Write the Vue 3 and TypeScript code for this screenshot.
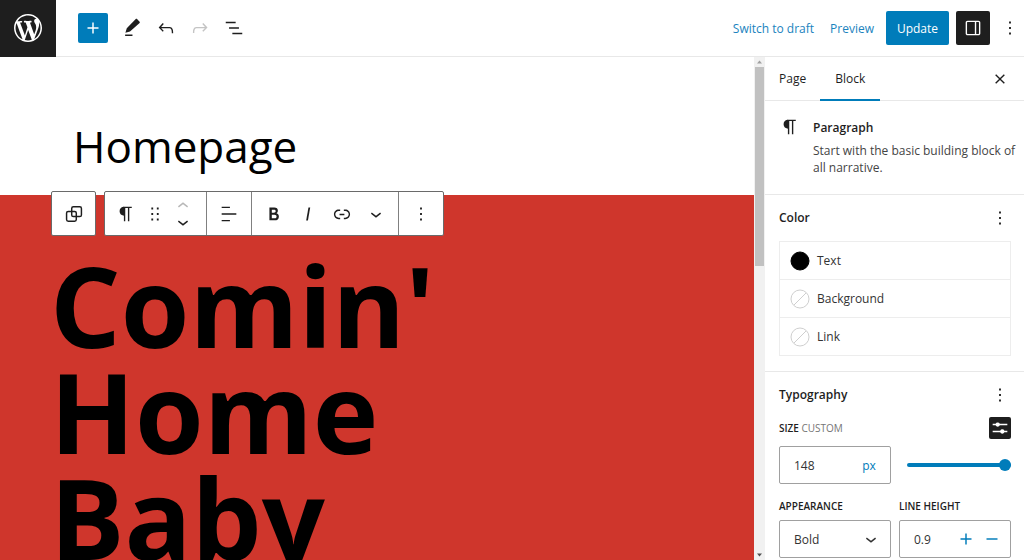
<script setup lang="ts">
import { ref } from 'vue'

const icons = {
  logo: 'M20 10c0-5.51-4.49-10-10-10C4.48 0 0 4.49 0 10c0 5.52 4.48 10 10 10 5.51 0 10-4.48 10-10zM7.78 15.37L4.37 6.22c.55-.02 1.17-.08 1.17-.08.5-.06.44-1.13-.06-1.11 0 0-1.45.11-2.37.11-.18 0-.37 0-.58-.01C4.12 2.69 6.87 1.11 10 1.11c2.33 0 4.45.87 6.05 2.34-.68-.11-1.65.39-1.65 1.58 0 .74.45 1.36.9 2.1.35.61.55 1.36.55 2.46 0 1.49-1.4 5-1.4 5l-3.03-8.37c.54-.02.82-.17.82-.17.5-.05.44-1.25-.06-1.22 0 0-1.44.12-2.38.12-.87 0-2.33-.12-2.33-.12-.5-.03-.56 1.2-.06 1.22l.92.08 1.26 3.41zM17.41 10c.24-.64.74-1.87.43-4.25.7 1.29 1.05 2.71 1.05 4.25 0 3.29-1.73 6.24-4.4 7.78.97-2.59 1.94-5.2 2.92-7.78zM6.1 18.09C3.12 16.65 1.11 13.53 1.11 10c0-1.3.23-2.48.72-3.59C3.25 10.3 4.67 14.2 6.1 18.09zm4.03-6.63l2.58 6.98c-.86.29-1.76.45-2.71.45-.79 0-1.57-.11-2.29-.33.81-2.38 1.62-4.74 2.42-7.1z',
  plus: 'M18 11.2h-5.2V6h-1.6v5.2H6v1.6h5.2V18h1.6v-5.2H18z',
  minus: 'M6 11.2h12v1.6H6z',
  edit: 'M20.3 5.300L17.500 2.300c-.4-.4-1-.4-1.400 0L6.300 12.200 4.800 17.200l5-1.500L20.300 6.500c.4-.4.4-.8 0-1.200zM4.500 20.800h8v-1.600h-8v1.600z',
  undo: 'M18.3 11.7c-.6-.6-1.4-.9-2.3-.9H6.7l2.9-3.3-1.1-1-4.5 5L8.5 16l1-1-2.7-2.7H16c.5 0 .9.2 1.3.5 1 1 1 3.4 1 4.5v.3h1.5v-.2c0-1.5 0-4.3-1.5-5.7z',
  redo: 'M15.6 6.5l-1.1 1 2.9 3.3H8c-.9 0-1.7.3-2.3.9-1.4 1.5-1.4 4.2-1.4 5.6v.2h1.5v-.3c0-1.1 0-3.5 1-4.5.3-.3.7-.5 1.3-.5h9.2L14.5 15l1.1 1.1 4.6-4.6-4.6-5z',
  list: 'M13.8 5.2H3v1.5h10.8V5.2zm-3.6 12v1.5H21v-1.5H10.2zm7.2-6H6.6v1.5h10.8v-1.5z',
  drawer: 'M18 4H6c-1.1 0-2 .9-2 2v12c0 1.1.9 2 2 2h12c1.1 0 2-.9 2-2V6c0-1.1-.9-2-2-2zm-4 14.5H6c-.3 0-.5-.2-.5-.5V6c0-.3.2-.5.5-.5h8v13zm4.5-.5c0 .3-.2.5-.5.5h-2.5v-13H18c.3 0 .5.2.5.5v12z',
  more: 'M13 19h-2v-2h2v2zm0-6h-2v-2h2v2zm0-6h-2V5h2v2z',
  close: 'M12 13.06l4.2 4.2 1.06-1.06L13.06 12l4.2-4.2-1.06-1.06L12 10.94l-4.2-4.2L6.74 7.8l4.2 4.2-4.2 4.2 1.06 1.06L12 13.06z',
  paragraph: 'M18.3 4H9.9v-.1l-.9.2c-2.3.4-4 2.4-4 4.8s1.7 4.4 4 4.8l.7.1V20h1.5V5.5h2.9V20h1.5V5.5h2.7V4z',
  drag: 'M8 7h2V5H8v2zm0 6h2v-2H8v2zm0 6h2v-2H8v2zm6-14v2h2V5h-2zm0 8h2v-2h-2v2zm0 6h2v-2h-2v2z',
  up: 'M6.5 12.4L12 8l5.5 4.4-.9 1.2L12 10l-4.5 3.6-1-1.2z',
  down: 'M17.5 11.6L12 16l-5.5-4.4.9-1.2L12 14l4.5-3.6 1 1.2z',
  align: 'M13 5.5H4V4h9v1.5Zm7 7.2H4v-1.5h16v1.5ZM13 20H4v-1.5h9V20Z',
  bold: 'M14.7 11.3c1-.6 1.5-1.6 1.5-3 0-2.3-1.3-3.4-4-3.4H7v14h5.8c1.4 0 2.5-.3 3.3-1 .8-.7 1.2-1.7 1.2-2.9.1-1.9-.8-3.1-2.6-3.7zm-5.1-4h2.3c.6 0 1.1.1 1.4.4.3.3.5.7.5 1.2s-.2 1-.5 1.2c-.3.3-.8.4-1.4.4H9.6V7.3zm4.6 9c-.4.3-1 .4-1.7.4H9.6v-3.9h2.9c.7 0 1.3.2 1.7.5.4.3.6.8.6 1.5s-.2 1.2-.6 1.5z',
  italic: 'M12.5 5L10 19h1.9l2.5-14z',
  link: 'M15.6 7.2H14v1.5h1.6c2 0 3.7 1.7 3.7 3.7s-1.7 3.7-3.7 3.7H14v1.5h1.6c2.8 0 5.2-2.3 5.2-5.2 0-2.9-2.3-5.2-5.2-5.2zM4.7 12.4c0-2 1.7-3.7 3.7-3.7H10V7.2H8.4c-2.9 0-5.2 2.3-5.2 5.2 0 2.9 2.3 5.2 5.2 5.2H10v-1.5H8.4c-2 0-3.7-1.7-3.7-3.7zm4.6.9h5.3v-1.5H9.3v1.5z',
  settings: 'M20 7.400h-8.200a2.500 2.500 0 0 0-4.600 0H4v1.700h3.200a2.500 2.500 0 0 0 4.600 0H20zM20 15h-3.200a2.500 2.500 0 0 0-4.600 0H4v1.700h8.200a2.500 2.500 0 0 0 4.600 0H20z',
}

const colors = [
  { name: 'Text', set: true },
  { name: 'Background', set: false },
  { name: 'Link', set: false },
]

const size = ref('148')
const slider = ref(148)
const appearance = ref('Bold')
const lineHeight = ref('0.9')
</script>

<template>
  <div class="editor">
    <header class="topbar">
      <a class="home" href="#" aria-label="View pages">
        <svg viewBox="0 0 20 20"><path :d="icons.logo" /></svg>
      </a>
      <div class="tools">
        <button class="tool add" aria-label="Add block"><svg class="icon" viewBox="0 0 24 24"><path :d="icons.plus" /></svg></button>
        <button class="tool" aria-label="Tools"><svg class="icon" viewBox="0 0 24 24"><path :d="icons.edit" /></svg></button>
        <button class="tool" aria-label="Undo"><svg class="icon" viewBox="0 0 24 24"><path :d="icons.undo" /></svg></button>
        <button class="tool" aria-label="Redo" disabled><svg class="icon" viewBox="0 0 24 24"><path :d="icons.redo" /></svg></button>
        <button class="tool" aria-label="List view"><svg class="icon" viewBox="0 0 24 24"><path :d="icons.list" /></svg></button>
      </div>
      <div class="actions">
        <button class="text-button">Switch to draft</button>
        <button class="text-button">Preview</button>
        <button class="update">Update</button>
        <button class="panel-toggle" aria-label="Settings" aria-pressed="true"><svg class="icon" viewBox="0 0 24 24"><path :d="icons.drawer" /></svg></button>
        <button class="options" aria-label="Options"><svg class="icon" viewBox="0 0 24 24"><path :d="icons.more" /></svg></button>
      </div>
    </header>

    <div class="body">
      <main class="canvas">
        <h1 class="title">Homepage</h1>
        <section class="cover">
          <div class="block-toolbar" role="toolbar" aria-label="Block tools">
            <div class="bar">
              <div class="group single">
                <button aria-label="Select parent block">
                  <svg class="icon outline" viewBox="0 0 24 24">
                    <rect x="9.500" y="4.200" width="10.600" height="10.600" rx="1.800" />
                    <rect x="3.900" y="9.200" width="10.600" height="10.600" rx="1.800" />
                  </svg>
                </button>
              </div>
            </div>
            <div class="bar">
              <div class="group block-type">
                <button aria-label="Paragraph"><svg class="icon" viewBox="0 0 24 24"><path :d="icons.paragraph" /></svg></button>
                <button class="narrow" aria-label="Drag"><svg class="icon" viewBox="0 0 24 24"><path :d="icons.drag" /></svg></button>
                <div class="movers">
                  <button aria-label="Move up" disabled><svg class="icon" viewBox="0 0 24 24"><path :d="icons.up" /></svg></button>
                  <button aria-label="Move down"><svg class="icon" viewBox="0 0 24 24"><path :d="icons.down" /></svg></button>
                </div>
              </div>
              <div class="group single">
                <button aria-label="Align text"><svg class="icon" viewBox="0 0 24 24"><path :d="icons.align" /></svg></button>
              </div>
              <div class="group format">
                <button aria-label="Bold"><svg class="icon" viewBox="0 0 24 24"><path :d="icons.bold" /></svg></button>
                <button aria-label="Italic"><svg class="icon" viewBox="0 0 24 24"><path :d="icons.italic" /></svg></button>
                <button aria-label="Link"><svg class="icon" viewBox="0 0 24 24"><path :d="icons.link" /></svg></button>
                <button aria-label="More"><svg class="icon" viewBox="0 0 24 24"><path :d="icons.down" /></svg></button>
              </div>
              <div class="group single">
                <button aria-label="Options"><svg class="icon" viewBox="0 0 24 24"><path :d="icons.more" /></svg></button>
              </div>
            </div>
          </div>
          <p class="lead">Comin'<br />Home<br />Baby</p>
        </section>
      </main>

      <div class="scrollbar" aria-hidden="true">
        <svg viewBox="0 0 11 9"><path d="M3 6l2.500-3L8 6z" fill="#a0a0a0" /></svg>
        <div class="thumb"></div>
        <svg viewBox="0 0 11 9"><path d="M3 3l2.500 3L8 3z" fill="#505050" /></svg>
      </div>

      <aside class="sidebar">
        <div class="tabs">
          <button class="tab">Page</button>
          <button class="tab active">Block</button>
          <button class="close" aria-label="Close settings"><svg class="icon" viewBox="0 0 24 24"><path :d="icons.close" /></svg></button>
        </div>

        <section class="card">
          <svg class="icon" viewBox="0 0 24 24"><path :d="icons.paragraph" /></svg>
          <div>
            <h2>Paragraph</h2>
            <p>Start with the basic building block of all narrative.</p>
          </div>
        </section>

        <section class="panel">
          <div class="panel-head">
            <h2>Color</h2>
            <button aria-label="Color options"><svg class="icon" viewBox="0 0 24 24"><path :d="icons.more" /></svg></button>
          </div>
          <div class="colors">
            <button v-for="c in colors" :key="c.name" class="color">
              <svg viewBox="0 0 20 20" class="swatch" :class="{ filled: c.set }">
                <circle cx="10" cy="10" r="9" />
                <path v-if="!c.set" d="M4 16L16 4" />
              </svg>
              {{ c.name }}
            </button>
          </div>
        </section>

        <section class="panel">
          <div class="panel-head type-head">
            <h2>Typography</h2>
            <button aria-label="Typography options"><svg class="icon" viewBox="0 0 24 24"><path :d="icons.more" /></svg></button>
          </div>
          <div class="size-head">
            <label for="size">SIZE <span>CUSTOM</span></label>
            <button class="preset" aria-label="Use size preset"><svg class="icon" viewBox="0 0 24 24"><path :d="icons.settings" /></svg></button>
          </div>
          <div class="pair size-row">
            <div class="field">
              <input id="size" v-model="size" type="text" />
              <button class="unit">px</button>
            </div>
            <input v-model="slider" class="range" type="range" min="0" max="148" aria-label="Size" />
          </div>
          <div class="pair">
            <div>
              <label class="caption" for="appearance">APPEARANCE</label>
              <div class="field">
                <select id="appearance" v-model="appearance">
                  <option>Bold</option>
                  <option>Regular</option>
                </select>
                <svg class="icon chevron" viewBox="0 0 24 24"><path :d="icons.down" /></svg>
              </div>
            </div>
            <div>
              <label class="caption" for="line-height">LINE HEIGHT</label>
              <div class="field">
                <input id="line-height" v-model="lineHeight" type="text" />
                <button class="step" aria-label="Increase"><svg class="icon" viewBox="0 0 24 24"><path :d="icons.plus" /></svg></button>
                <button class="step" aria-label="Decrease"><svg class="icon" viewBox="0 0 24 24"><path :d="icons.minus" /></svg></button>
              </div>
            </div>
          </div>
        </section>
      </aside>
    </div>
  </div>
</template>

<style>
body {
  margin: 0;
  overflow: hidden;
}
</style>

<style scoped>
.editor {
  display: flex;
  flex-direction: column;
  height: 100vh;
  overflow: hidden;
  background: #fff;
  color: #1e1e1e;
  font-family: "Open Sans", "Noto Sans", sans-serif;
  font-size: 12px;
}
.editor * {
  box-sizing: border-box;
}
button,
input,
select {
  margin: 0;
  padding: 0;
  border: 0;
  background: none;
  color: inherit;
  font: inherit;
}
button {
  display: flex;
  align-items: center;
  justify-content: center;
}
h1,
h2,
p {
  margin: 0;
}
.icon {
  display: block;
  flex: none;
  width: 22px;
  height: 22px;
  fill: currentColor;
}
.outline {
  fill: none;
  stroke: currentColor;
  stroke-width: 1.6;
}

/* Top bar */
.topbar {
  display: flex;
  flex: none;
  align-items: center;
  height: 57px;
  border-bottom: 1px solid #e8e8e8;
}
.home {
  display: flex;
  align-items: center;
  justify-content: center;
  flex: none;
  width: 56px;
  height: 57px;
  background: #1e1e1e;
  color: #fff;
}
.home svg {
  width: 28px;
  height: 28px;
  fill: currentColor;
}
.tools {
  display: flex;
  gap: 4px;
  margin-left: 22px;
}
.tool {
  width: 30px;
  height: 30px;
}
.tool:disabled {
  color: #c4c4c4;
}
.add {
  margin-right: 5px;
  border-radius: 2px;
  background: #007cba;
  color: #fff;
}
.actions {
  display: flex;
  align-items: center;
  margin-left: auto;
}
.text-button {
  margin-right: 16px;
  color: #1a83be;
}
.text-button + .text-button {
  margin-right: 12px;
}
.update {
  width: 63px;
  height: 34px;
  border-radius: 2px;
  background: #007cba;
  color: #fff;
}
.panel-toggle {
  width: 34px;
  height: 34px;
  margin-left: 7px;
  border-radius: 2px;
  background: #1e1e1e;
  color: #fff;
}
.options {
  width: 34px;
  height: 34px;
  margin: 0 -3px 0 3px;
}

/* Canvas */
.body {
  display: flex;
  flex: 1;
  min-height: 0;
}
.canvas {
  display: flex;
  flex: 1;
  flex-direction: column;
  min-width: 0;
  overflow: hidden;
  color: #000;
}
.title {
  padding: 59px 73px 19px;
  font-size: 44px;
  font-weight: 400;
  line-height: 60px;
}
.cover {
  position: relative;
  flex: 1;
  padding: 57px 50px 0;
  background: #cf362c;
}
.lead {
  font-size: 111px;
  font-weight: 700;
  line-height: 106px;
}
.block-toolbar {
  position: absolute;
  top: -4px;
  left: 51px;
  display: flex;
  gap: 8px;
  color: #1e1e1e;
}
.bar {
  display: flex;
  height: 45px;
  border: 1px solid #6a6a6a;
  border-radius: 2px;
  background: #fff;
}
.group {
  display: flex;
  align-items: center;
  justify-content: center;
}
.group + .group {
  border-left: 1px solid #808080;
}
.group button {
  width: 34px;
  height: 34px;
}
.single {
  width: 45px;
}
.bar > .single:only-child {
  width: 43px;
}
.block-type {
  width: 101px;
  padding-left: 4px;
  justify-content: flex-start;
}
.group .narrow {
  width: 24px;
}
.movers {
  display: flex;
  flex-direction: column;
  width: 32px;
}
.group .movers button {
  width: 32px;
  height: 16px;
}
.group .movers button:disabled {
  color: #b8b8b8;
}
.format {
  width: 147px;
}

/* Scrollbar */
.scrollbar {
  display: flex;
  flex: none;
  flex-direction: column;
  width: 11px;
  background: #f1f1f1;
}
.scrollbar svg {
  flex: none;
  width: 11px;
  height: 10px;
}
.thumb {
  width: 9px;
  height: 199px;
  margin: 0 auto auto;
  background: #c1c1c1;
}

/* Sidebar */
.sidebar {
  flex: none;
  width: 259px;
  overflow: hidden;
}
.tabs {
  display: flex;
  height: 44px;
  border-bottom: 1px solid #e8e8e8;
}
.tab {
  height: 44px;
  padding: 0 14px;
  border-bottom: 2px solid transparent;
}
.tab.active {
  padding: 0 15px;
  border-color: #007cba;
}
.close {
  width: 24px;
  margin: 0 12px 0 auto;
}
h2 {
  font-size: 12px;
  font-weight: 600;
  line-height: 18px;
}
.card {
  display: flex;
  gap: 12px;
  padding: 18px 4px 18px 14px;
  border-bottom: 1px solid #e8e8e8;
}
.card .icon {
  margin-top: -3px;
}
.card h2 {
  margin-bottom: 5px;
}
.card p {
  color: #444;
  line-height: 17px;
}
.panel {
  padding: 10px 13px 15px 14px;
  border-bottom: 1px solid #e8e8e8;
}
.panel-head {
  display: flex;
  align-items: center;
  justify-content: space-between;
  height: 26px;
  margin-bottom: 10px;
}
.type-head {
  margin-bottom: 9px;
}
.panel-head button {
  width: 22px;
  height: 26px;
}
.colors {
  border: 1px solid #ededed;
}
.color {
  justify-content: flex-start;
  gap: 7px;
  width: 100%;
  height: 37px;
  padding-left: 10px;
  color: #333;
}
.color + .color {
  height: 38px;
  border-top: 1px solid #ededed;
}
.swatch {
  width: 20px;
  height: 20px;
  fill: none;
  stroke: #cfcfcf;
}
.swatch.filled {
  fill: #000;
  stroke: #000;
}
.size-head {
  display: flex;
  align-items: center;
  justify-content: space-between;
  margin-bottom: 7px;
}
label {
  font-size: 10px;
  font-weight: 600;
  line-height: 16px;
}
label span {
  color: #757575;
  font-weight: 400;
}
.preset {
  width: 22px;
  height: 22px;
  border-radius: 2px;
  background: #1e1e1e;
  color: #fff;
}
.pair {
  display: grid;
  grid-template-columns: 1fr 1fr;
  gap: 8px;
}
.size-row {
  align-items: center;
  margin-bottom: 14px;
}
.caption {
  display: block;
  margin-bottom: 6px;
}
.field {
  position: relative;
  display: flex;
  align-items: center;
  height: 38px;
  border: 1px solid #a0a0a0;
  border-radius: 2px;
  color: #333;
}
.field input {
  flex: 1;
  width: 0;
  min-width: 0;
  height: 100%;
  padding-left: 14px;
}
.field select {
  width: 100%;
  height: 100%;
  padding-left: 14px;
  appearance: none;
}
.chevron {
  position: absolute;
  right: 8px;
  pointer-events: none;
}
.unit {
  width: 42px;
  height: 36px;
  color: #007cba;
}
.step {
  width: 26px;
  height: 36px;
  color: #007cba;
}
.step:last-child {
  margin-right: 5px;
}
.range {
  width: 104px;
  height: 12px;
  margin-left: auto;
  appearance: none;
}
.range::-webkit-slider-runnable-track {
  height: 4px;
  border-radius: 2px;
  background: #007cba;
}
.range::-webkit-slider-thumb {
  width: 12px;
  height: 12px;
  margin-top: -4px;
  border-radius: 50%;
  background: #007cba;
  appearance: none;
}
</style>
